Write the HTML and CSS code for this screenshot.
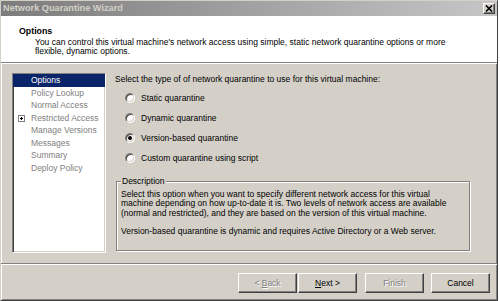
FILE: index.html
```html
<!DOCTYPE html>
<html>
<head>
<meta charset="utf-8">
<title>Network Quarantine Wizard</title>
<link rel="stylesheet" href="styles.css">
</head>
<body>
<div class="window">
  <div class="titlebar">
    <span class="title">Network Quarantine Wizard</span>
    <span class="close"><svg width="8" height="7" viewBox="0 0 8 7"><path d="M1 0.5 L7 6.5 M7 0.5 L1 6.5" stroke="#000" stroke-width="1.6"/></svg></span>
  </div>
  <div class="header">
    <div class="h-title">Options</div>
    <div class="h-sub">You can control this virtual machine's network access using simple, static network quarantine options or more<br>flexible, dynamic options.</div>
  </div>
  <div class="main">
    <ul class="steps">
      <li class="step active">Options</li>
      <li class="step">Policy Lookup</li>
      <li class="step">Normal Access</li>
      <li class="step"><span class="expander"></span>Restricted Access</li>
      <li class="step">Manage Versions</li>
      <li class="step">Messages</li>
      <li class="step">Summary</li>
      <li class="step">Deploy Policy</li>
    </ul>
    <div class="content">
      <p class="prompt">Select the type of of network quarantine to use for this virtual machine:</p>
      <div class="radios">
        <div class="radio"><span class="circle"></span>Static quarantine</div>
        <div class="radio"><span class="circle"></span>Dynamic quarantine</div>
        <div class="radio"><span class="circle checked"></span>Version-based quarantine</div>
        <div class="radio"><span class="circle"></span>Custom quarantine using script</div>
      </div>
      <div class="group">
        <span class="legend">Description</span>
        <p class="desc">Select this option when you want to specify different network access for this virtual<br>machine depending on how up-to-date it is. Two levels of network access are available<br>(normal and restricted), and they are based on the version of this virtual machine.</p>
        <p class="desc second">Version-based quarantine is dynamic and requires Active Directory or a Web server.</p>
      </div>
    </div>
  </div>
  <div class="footer">
    <button class="btn disabled back">&lt; <u>B</u>ack</button>
    <button class="btn next"><u>N</u>ext &gt;</button>
    <button class="btn disabled finish">Finish</button>
    <button class="btn">Cancel</button>
  </div>
</div>
</body>
</html>
```

FILE: styles.css
```css
* { box-sizing: border-box; }
html, body {
  margin: 0;
  padding: 0;
  background: #ffffff;
}
body {
  font-family: "Liberation Sans", Arial, sans-serif;
  font-size: 8.5px;
  color: #000;
}
.window {
  width: 498px;
  height: 301px;
  background: #d4d0c8;
  border-top: 1px solid #d4d0c8;
  border-left: 1px solid #d4d0c8;
  border-right: 1px solid #404040;
  border-bottom: 1px solid #404040;
  box-shadow: inset 1px 1px #ffffff, inset -1px -1px #808080;
  display: flex;
  flex-direction: column;
}
.titlebar {
  height: 15px;
  flex: none;
  background: linear-gradient(to right, #7c7c7c, #c6c6c6);
  display: flex;
  align-items: center;
  justify-content: space-between;
  padding: 0 1px 0 2px;
}
.title {
  color: #d4d0c8;
  font-weight: bold;
  font-size: 9.2px;
  line-height: 15px;
}
.close {
  width: 12px;
  height: 11px;
  background: #d4d0c8;
  border: 1px solid;
  border-color: #ffffff #404040 #404040 #ffffff;
  box-shadow: inset -1px -1px #808080;
  display: flex;
  align-items: center;
  justify-content: center;
  margin-right: 1px;
}
.close svg { display: block; }
.header {
  height: 47px;
  flex: none;
  background: #ffffff;
  border-bottom: 1px solid #808080;
  padding: 10px 0 0 18px;
}
.h-title {
  font-weight: bold;
  font-size: 8.8px;
  line-height: 10px;
}
.h-sub {
  margin-top: 2px;
  padding-left: 16px;
  line-height: 9px;
}
.main {
  flex: 1;
  display: flex;
  border-top: 1px solid #ffffff;
  padding: 9px 0 10px 11px;
}
.steps {
  list-style: none;
  margin: 0;
  padding: 0;
  width: 94px;
  flex: none;
  background: #ffffff;
  border: 1px solid;
  border-color: #808080 #ffffff #ffffff #808080;
  box-shadow: inset 1px 1px #404040, inset -1px -1px #d4d0c8;
}
.step {
  position: relative;
  height: 12.5px;
  line-height: 12.5px;
  padding-left: 18px;
  color: #808080;
  white-space: nowrap;
}
.step.active {
  background: #0a246a;
  color: #ffffff;
}
.expander {
  position: absolute;
  left: 5px;
  top: 3px;
  width: 7px;
  height: 7px;
  border: 1px solid #808080;
  background: #ffffff;
}
.expander::before,
.expander::after {
  content: "";
  position: absolute;
  background: #000;
}
.expander::before { left: 1px; top: 2px; width: 3px; height: 1px; }
.expander::after { left: 2px; top: 1px; width: 1px; height: 3px; }
.content {
  flex: 1;
  margin-left: 9px;
  display: flex;
  flex-direction: column;
}
.prompt {
  margin: 1px 0 0 0;
  line-height: 10px;
}
.radios {
  margin-top: 4px;
  display: flex;
  flex-direction: column;
}
.radio {
  height: 20px;
  display: flex;
  align-items: center;
  padding-left: 10px;
}
.circle {
  width: 10px;
  height: 10px;
  border-radius: 50%;
  background: #ffffff;
  border: 1px solid;
  border-color: #808080 #ffffff #ffffff #808080;
  box-shadow: inset 1px 1px #404040, inset -1px -1px #d4d0c8;
  margin-right: 6px;
  display: flex;
  align-items: center;
  justify-content: center;
}
.circle.checked::after {
  content: "";
  width: 4px;
  height: 4px;
  border-radius: 50%;
  background: #000;
}
.group {
  position: relative;
  margin: 13px 0 0 1px;
  width: 354px;
  height: 70px;
  border: 1px solid #808080;
  box-shadow: inset 1px 1px #ffffff, 1px 1px #ffffff;
  padding: 8px 4px 0 4px;
}
.legend {
  position: absolute;
  top: -6px;
  left: 4px;
  padding: 0 1px;
  background: #d4d0c8;
  line-height: 10px;
}
.desc {
  margin: 0;
  line-height: 9.33px;
  white-space: nowrap;
}
.desc.second { margin-top: 9.33px; }
.footer {
  height: 37px;
  flex: none;
  border-top: 1px solid #808080;
  box-shadow: inset 0 1px #ffffff;
  display: flex;
  justify-content: flex-end;
  align-items: flex-start;
  padding: 9px 7px 0 0;
}
.btn {
  width: 59px;
  height: 20px;
  margin: 0;
  padding: 0;
  font-family: "Liberation Sans", Arial, sans-serif;
  font-size: 8.5px;
  color: #000;
  background: #d4d0c8;
  border: 1px solid;
  border-color: #ffffff #404040 #404040 #ffffff;
  box-shadow: inset -1px -1px #808080;
}
.btn u { text-decoration: underline; }
.btn.disabled {
  color: #808080;
  text-shadow: 1px 1px #ffffff;
}
.btn.back { margin-right: 1px; }
.btn.next { margin-right: 8px; }
.btn.finish { margin-right: 7px; }
```
